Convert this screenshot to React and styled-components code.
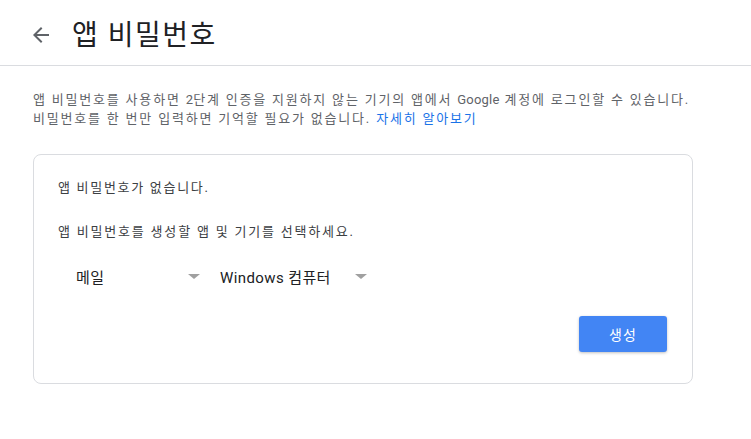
import React from "react";
import styled, { createGlobalStyle } from "styled-components";

const Global = createGlobalStyle`
  html, body { margin: 0; padding: 0; background: #fff; }
  body { font-family: Roboto, "Noto Sans CJK KR", sans-serif; color: #202124; }
`;

const Header = styled.header`
  height: 65px;
  border-bottom: 1px solid #dadce0;
  display: flex;
  align-items: center;
  padding-left: 31px;
`;

const BackButton = styled.button`
  border: 0;
  background: none;
  padding: 0;
  width: 20px;
  height: 20px;
  display: flex;
  align-items: center;
  justify-content: center;
  color: #5f6368;
  margin-right: 21px;
  margin-top: 4px;
  cursor: pointer;
`;

const Title = styled.h1`
  margin: 0;
  font-weight: 400;
  font-size: 28px;
  color: #202124;
  letter-spacing: 1.5px;
  font-family: Roboto, "Noto Sans CJK KR", sans-serif;
`;

const Main = styled.main`
  padding: 24px 0 0 33px;
  width: 660px;
`;

const Desc = styled.p`
  margin: 0;
  font-size: 13px;
  line-height: 19px;
  color: #5f6368;
  letter-spacing: 1.8px;
  white-space: nowrap;
`;

const Latin = styled.span`
  letter-spacing: 0.2px;
`;

const Link = styled.a`
  color: #1a73e8;
  text-decoration: none;
`;

const Card = styled.section`
  margin-top: 26px;
  border: 1px solid #dadce0;
  border-radius: 8px;
  padding: 23px 24px 30px 24px;
  height: 175px;
`;

const CardText = styled.p`
  margin: 0 0 ${(p) => p.$mb || 0}px;
  font-size: 13px;
  line-height: 20px;
  color: #3c4043;
  letter-spacing: ${(p) => p.$ls || 1.8}px;
`;

const SelectRow = styled.div`
  display: flex;
  align-items: center;
  gap: 20px;
  padding-left: 18px;
  height: 24px;
`;

const Select = styled.div`
  display: flex;
  align-items: center;
  font-size: 15px;
  letter-spacing: 0.4px;
  color: #202124;
  cursor: pointer;
`;

const SelectLabel = styled.span`
  width: ${(p) => p.$w}px;
`;

const Caret = styled.span`
  width: 0;
  height: 0;
  border-left: 6px solid transparent;
  border-right: 6px solid transparent;
  border-top: 5px solid #a0a0a0;
`;

const Actions = styled.div`
  display: flex;
  justify-content: flex-end;
  margin-top: 28px;
  padding-right: 1px;
`;

const PrimaryButton = styled.button`
  width: 88px;
  height: 36px;
  border: 0;
  border-radius: 3px;
  background: #4285f4;
  color: #fff;
  font-size: 14px;
  letter-spacing: 1px;
  font-family: Roboto, "Noto Sans CJK KR", sans-serif;
  box-shadow: 0 1px 3px rgba(0, 0, 0, 0.25);
  cursor: pointer;
`;

export default function App() {
  return (
    <>
      <Global />
      <Header>
        <BackButton aria-label="뒤로">
          <svg width="16" height="16" viewBox="0 0 16 16">
            <path d="M16 7H3.83l5.59-5.59L8 0 0 8l8 8 1.41-1.41L3.83 9H16z" fill="#5f6368" />
          </svg>
        </BackButton>
        <Title>앱 비밀번호</Title>
      </Header>
      <Main>
        <Desc>
          앱 비밀번호를 사용하면 <Latin>2</Latin>단계 인증을 지원하지 않는 기기의 앱에서 <Latin>Google</Latin> 계정에 로그인할 수 있습니다.
          <br />
          비밀번호를 한 번만 입력하면 기억할 필요가 없습니다. <Link href="#">자세히 알아보기</Link>
        </Desc>
        <Card>
          <CardText $mb={24} $ls={1.7}>앱 비밀번호가 없습니다.</CardText>
          <CardText $mb={22}>앱 비밀번호를 생성할 앱 및 기기를 선택하세요.</CardText>
          <SelectRow>
            <Select>
              <SelectLabel $w={112}>메일</SelectLabel>
              <Caret />
            </Select>
            <Select>
              <SelectLabel $w={135}>Windows 컴퓨터</SelectLabel>
              <Caret />
            </Select>
          </SelectRow>
          <Actions>
            <PrimaryButton>생성</PrimaryButton>
          </Actions>
        </Card>
      </Main>
    </>
  );
}
